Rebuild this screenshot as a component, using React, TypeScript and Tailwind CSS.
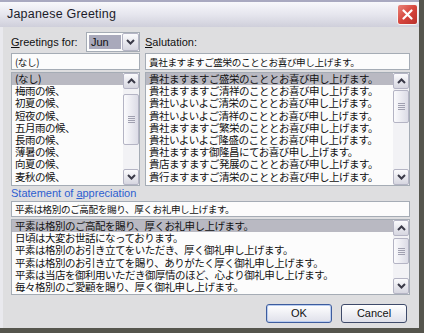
const jp = "font-['Noto_Sans_CJK_JP',sans-serif]";
const ui = "font-['Liberation_Sans',Arial,sans-serif]";

const greetings = ["(なし)", "梅雨の候、", "初夏の候、", "短夜の候、", "五月雨の候、", "長雨の候、", "薄暑の候、", "向夏の候、", "麦秋の候、"];

const salutations = [
  "貴社ますますご盛栄のこととお喜び申し上げます。",
  "貴社ますますご清祥のこととお喜び申し上げます。",
  "貴社いよいよご清栄のこととお喜び申し上げます。",
  "貴社いよいよご清祥のこととお喜び申し上げます。",
  "貴社ますますご繁栄のこととお喜び申し上げます。",
  "貴社いよいよご隆盛のこととお喜び申し上げます。",
  "貴社ますます御隆昌にてお喜び申し上げます。",
  "貴店ますますご発展のこととお喜び申し上げます。",
  "貴行ますますご清栄のこととお喜び申し上げます。",
];

const statements = [
  "平素は格別のご高配を賜り、厚くお礼申し上げます。",
  "日頃は大変お世話になっております。",
  "平素は格別のお引き立てをいただき、厚く御礼申し上げます。",
  "平素は格別のお引き立てを賜り、ありがたく厚く御礼申し上げます。",
  "平素は当店を御利用いただき御厚情のほど、心より御礼申し上げます。",
  "毎々格別のご愛顧を賜り、厚く御礼申し上げます。",
];

function Chevron({ up }: { up?: boolean }) {
  return (
    <svg width="9" height="6" viewBox="0 0 9 6">
      <path d={up ? "M1 5 L4.5 1.5 L8 5" : "M1 1 L4.5 4.5 L8 1"} fill="none" stroke="#3a3a48" strokeWidth="2" />
    </svg>
  );
}

function ArrowBtn({ up }: { up?: boolean }) {
  return (
    <div className="h-[16px] shrink-0 flex items-center justify-center rounded-[2px] border border-[#b4b4c4] bg-gradient-to-b from-[#fbfbfd] to-[#d6d6e0]">
      <Chevron up={up} />
    </div>
  );
}

function Thumb({ cls }: { cls: string }) {
  return (
    <div className={`${cls} flex flex-col items-center justify-center gap-[1px] rounded-[2px] border border-[#b4b4c4] bg-gradient-to-r from-[#fbfbfd] to-[#dcdce6]`}>
      <div className="w-[7px] h-[1px] bg-[#a0a0b0]" />
      <div className="w-[7px] h-[1px] bg-[#a0a0b0]" />
      <div className="w-[7px] h-[1px] bg-[#a0a0b0]" />
      <div className="w-[7px] h-[1px] bg-[#a0a0b0]" />
    </div>
  );
}

function ScrollBar({ thumb }: { thumb: string }) {
  return (
    <div className="w-[16px] shrink-0 flex flex-col bg-[#f2f2f5]">
      <ArrowBtn up />
      <div className="flex-1 flex flex-col">
        <Thumb cls={thumb} />
      </div>
      <ArrowBtn />
    </div>
  );
}

function ListBox({ items, h, thumb }: { items: string[]; h: string; thumb: string }) {
  return (
    <div className={`${h} flex border border-[#a5acb5] bg-[#fcfcfc]`}>
      <div className={`flex-1 overflow-hidden ${jp} text-[10.5px] tracking-[-0.5px] text-[#111]`}>
        {items.map((t, i) => (
          <div key={i} className={`h-[12.2px] leading-[12.2px] pl-[3px] whitespace-nowrap ${i === 0 ? "bg-[#b9b9c2]" : ""}`}>
            {t}
          </div>
        ))}
      </div>
      <ScrollBar thumb={thumb} />
    </div>
  );
}

function TextBox({ text, h }: { text: string; h: string }) {
  return (
    <div className={`${h} flex items-center border border-[#a5acb5] bg-[#fcfcfc] pl-[3px] ${jp} text-[9.6px] tracking-[-0.4px] leading-[12px] text-[#111] whitespace-nowrap overflow-hidden`}>
      {text}
    </div>
  );
}

export default function App() {
  return (
    <div className={`w-[424px] h-[333px] flex flex-col bg-[#dedee0] border-r-[5px] border-b-[5px] border-[#55554d] overflow-hidden ${ui}`}>
      <div className="h-[27px] shrink-0 flex items-center justify-between pl-[7px] pr-[1px] border-t-2 border-[#a9a9c0] bg-gradient-to-b from-[#f8f8fb] via-[#e6e6ee] to-[#cfcfdb]">
        <span className="text-[12.5px] text-[#1c1c2a] tracking-[0.2px]">Japanese Greeting</span>
        <div className="w-[21px] h-[21px] flex items-center justify-center rounded-[3px] border border-[#f4f4f4] bg-gradient-to-br from-[#e8837a] via-[#d6443c] to-[#b9302b]">
          <svg width="11" height="11" viewBox="0 0 11 11">
            <path d="M1.5 1.5 L9.5 9.5 M9.5 1.5 L1.5 9.5" stroke="#fff" strokeWidth="2.2" strokeLinecap="round" />
          </svg>
        </div>
      </div>

      <div className="flex-1 flex flex-col pl-[8px] pr-[9px] pt-[5px] border-l-[3px] border-[#e9e9ee]">
        <div className="flex gap-[5px]">
          <div className="w-[129px] flex flex-col">
            <div className="h-[20px] flex items-center justify-between">
              <span className="text-[11px] text-[#111]"><span className="underline">G</span>reetings for:</span>
              <div className="w-[54px] h-[20px] flex items-center border border-[#a5acb5] bg-[#fcfcfc] pl-[2px]">
                <div className="flex-1 h-[14px] flex items-center pl-[2px] bg-[#a9a9bb] text-[11px] text-[#111]">Jun</div>
                <div className="w-[17px] h-[18px] ml-[1px] flex items-center justify-center rounded-[2px] border border-[#b4b4c4] bg-gradient-to-b from-[#fbfbfd] to-[#d6d6e0]">
                  <Chevron />
                </div>
              </div>
            </div>
            <div className="mt-[1px]">
              <TextBox text="(なし)" h="h-[17px]" />
            </div>
            <div className="mt-[2px]">
              <ListBox items={greetings} h="h-[114px]" thumb="mt-[5px] h-[51px]" />
            </div>
          </div>

          <div className="flex-1 flex flex-col">
            <div className="h-[20px] flex items-center">
              <span className="text-[11px] text-[#111]"><span className="underline">S</span>alutation:</span>
            </div>
            <div className="mt-[1px]">
              <TextBox text="貴社ますますご盛栄のこととお喜び申し上げます。" h="h-[17px]" />
            </div>
            <div className="mt-[2px]">
              <ListBox items={salutations} h="h-[114px]" thumb="mt-[1px] h-[33px]" />
            </div>
          </div>
        </div>

        <div className="h-[15px] flex items-center text-[11px] text-[#2d5fd0]">
          Statement of <span className="underline ml-[3px]">a</span>ppreciation
        </div>
        <TextBox text="平素は格別のご高配を賜り、厚くお礼申し上げます。" h="h-[16px]" />
        <div className="mt-[2px]">
          <ListBox items={statements} h="h-[76px]" thumb="mt-[2px] h-[26px]" />
        </div>

        <div className="mt-[9px] flex justify-end gap-[9px] pr-[3px]">
          <button className="w-[66px] h-[19px] rounded-[3px] border border-[#3d5c9e] bg-gradient-to-b from-[#ffffff] to-[#dfe0ea] shadow-[inset_0_0_0_1px_#b9cdf0] text-[11px] text-[#111]">OK</button>
          <button className="w-[66px] h-[19px] rounded-[3px] border border-[#3e4a6a] bg-gradient-to-b from-[#ffffff] to-[#dfe0ea] text-[11px] text-[#111]">Cancel</button>
        </div>
      </div>
    </div>
  );
}
